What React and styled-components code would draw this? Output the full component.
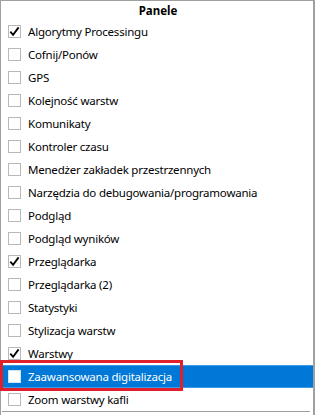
import React from "react";
import styled, { createGlobalStyle } from "styled-components";

const Global = createGlobalStyle`
  html, body { margin: 0; padding: 0; background: #ffffff; }
  body { font-family: "Noto Sans", "Open Sans", sans-serif; }
`;

const Menu = styled.div`
  position: relative;
  width: 315px;
  height: 415px;
  box-sizing: border-box;
  border-top: 1px solid #a0a0a0;
  border-left: 1px solid #a0a0a0;
  border-right: 2px solid #a0a0a0;
  background: #ffffff;
  display: flex;
  flex-direction: column;
`;

const Header = styled.div`
  height: 18px;
  display: flex;
  align-items: center;
  justify-content: center;
  font-size: 11.5px;
  font-weight: 700;
  color: #000;
  padding-left: 2px;
  padding-bottom: 1px;
`;

const Row = styled.div`
  height: ${(p) => (p.$active ? "21px" : "23px")};
  display: flex;
  align-items: center;
  margin-left: 2px;
  background: ${(p) => (p.$active ? "#0078d7" : "transparent")};
  border-top: ${(p) => (p.$active ? "1px solid #3c9be6" : "none")};
  border-bottom: ${(p) => (p.$active ? "1px solid #3c9be6" : "none")};
  color: ${(p) => (p.$active ? "#ffffff" : "#000000")};
  font-size: 11.5px;
`;

const Box = styled.span`
  width: 13px;
  height: 13px;
  box-sizing: border-box;
  border: 1px solid ${(p) => (p.$active ? "#d0e4f5" : "#b8b8b8")};
  background: #ffffff;
  margin-left: 5px;
  margin-right: 7px;
  display: flex;
  align-items: center;
  justify-content: center;
  flex-shrink: 0;
`;

const Label = styled.span`
  white-space: nowrap;
  letter-spacing: -0.22px;
`;

const Separator = styled.div`
  height: 1px;
  background: #a0a0a0;
  margin: 0 3px 0 1px;
`;

const Highlight = styled.div`
  position: absolute;
  left: -1px;
  top: 359px;
  width: 183px;
  height: 31px;
  box-sizing: border-box;
  border: 3px solid #e0202a;
  pointer-events: none;
`;

const Check = () => (
  <svg width="11" height="11" viewBox="0 0 11 11">
    <path d="M1.3 5.6 L4.1 8.8 L9.6 1.4" fill="none" stroke="#000" strokeWidth="1.8" />
  </svg>
);

const items = [
  ["Algorytmy Processingu", true],
  ["Cofnij/Ponów", false],
  ["GPS", false],
  ["Kolejność warstw", false],
  ["Komunikaty", false],
  ["Kontroler czasu", false],
  ["Menedżer zakładek przestrzennych", false],
  ["Narzędzia do debugowania/programowania", false],
  ["Podgląd", false],
  ["Podgląd wyników", false],
  ["Przeglądarka", true],
  ["Przeglądarka (2)", false],
  ["Statystyki", false],
  ["Stylizacja warstw", false],
  ["Warstwy", true],
  ["Zaawansowana digitalizacja", false, true],
  ["Zoom warstwy kafli", false],
];

export default function App() {
  return (
    <>
      <Global />
      <Menu>
        <Header>Panele</Header>
        {items.map(([label, checked, active]) => (
          <Row key={label} $active={active}>
            <Box $active={active}>{checked && <Check />}</Box>
            <Label>{label}</Label>
          </Row>
        ))}
        <Separator />
        <Highlight />
      </Menu>
    </>
  );
}
